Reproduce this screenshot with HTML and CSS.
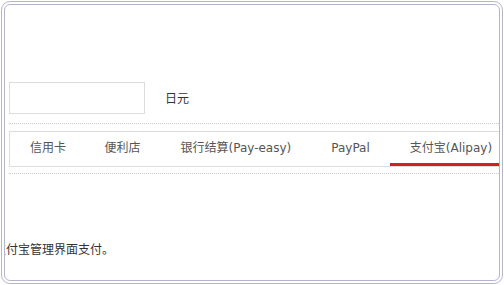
FILE: index.html
```html
<!DOCTYPE html>
<html lang="zh">
<head>
    <meta charset="UTF-8">
    <title>支付方式</title>
    <link rel="stylesheet" href="styles.css">
</head>
<body>
    <div class="frame">
        <div class="content">
            <div class="amount-row">
                <input class="amount" type="text">
                <span class="unit">日元</span>
            </div>
            <div class="dots"></div>
            <div class="tabs">
                <div class="tab">信用卡</div>
                <div class="tab">便利店</div>
                <div class="tab">银行结算(Pay-easy)</div>
                <div class="tab">PayPal</div>
                <div class="tab active">支付宝(Alipay)</div>
            </div>
            <div class="dots"></div>
            <p class="note">请通过支付宝管理界面支付。</p>
        </div>
    </div>
</body>
</html>
```

FILE: styles.css
```css
body {
    margin: 0;
    background-color: #fff;
    font-family: "DejaVu Sans", "Noto Sans CJK SC", sans-serif;
    font-size: 12px;
    color: #444;
}

.frame {
    box-sizing: border-box;
    width: 502px;
    height: 283px;
    margin: 1px;
    border: 4px double #b4b4ca;
    border-radius: 9px;
    overflow: hidden;
}

.content {
    padding: 77px 0 0 4px;
}

.amount-row {
    display: flex;
    align-items: center;
    height: 32px;
}

.amount {
    box-sizing: border-box;
    width: 136px;
    height: 32px;
    margin: 0;
    border: 1px solid #dcdcdc;
}

.unit {
    margin-left: 20px;
    margin-top: -1px;
    color: #333;
}

.dots {
    margin-top: 9px;
    width: 490px;
    border-top: 1px dotted #cdcdcd;
}

.tabs {
    display: flex;
    width: 520px;
    height: 34px;
    margin-top: 7px;
    border: 1px solid #dcdcdc;
}

.tab {
    box-sizing: border-box;
    height: 34px;
    padding: 0 20px;
    line-height: 32px;
    color: #555;
    white-space: nowrap;
}

.tab:first-child {
    padding-left: 20px;
    padding-right: 18.5px;
}

.tab.active {
    flex: 1;
    border-bottom: 3px solid #d61f1f;
}

.tabs + .dots {
    margin-top: 6px;
}

.note {
    margin: 66px 0 0 -51px;
    color: #333;
    white-space: nowrap;
}
```
